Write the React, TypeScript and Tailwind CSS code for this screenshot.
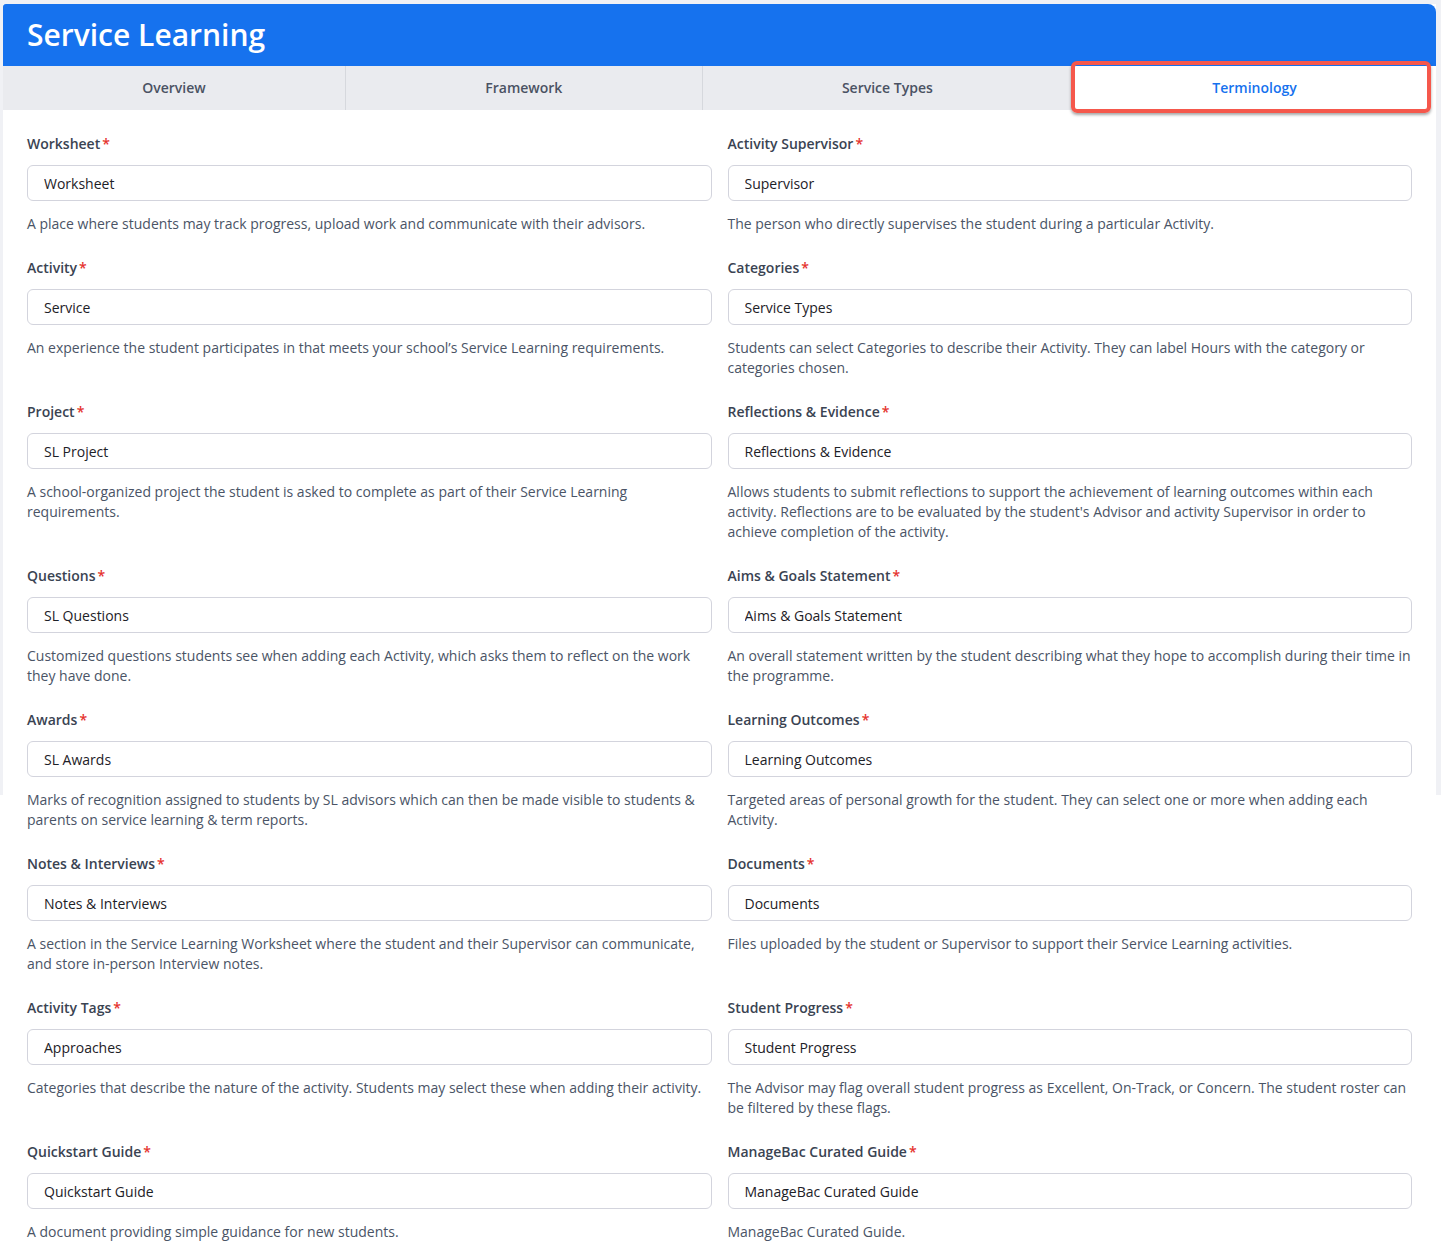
import React from "react";

const TABS = ["Overview", "Framework", "Service Types", "Terminology"];

const TERMS: { label: string; value: string; desc: string }[] = [
  { label: "Worksheet", value: "Worksheet", desc: "A place where students may track progress, upload work and communicate with their advisors." },
  { label: "Activity Supervisor", value: "Supervisor", desc: "The person who directly supervises the student during a particular Activity." },
  { label: "Activity", value: "Service", desc: "An experience the student participates in that meets your school’s Service Learning requirements." },
  { label: "Categories", value: "Service Types", desc: "Students can select Categories to describe their Activity. They can label Hours with the category or categories chosen." },
  { label: "Project", value: "SL Project", desc: "A school-organized project the student is asked to complete as part of their Service Learning requirements." },
  { label: "Reflections & Evidence", value: "Reflections & Evidence", desc: "Allows students to submit reflections to support the achievement of learning outcomes within each activity. Reflections are to be evaluated by the student's Advisor and activity Supervisor in order to achieve completion of the activity." },
  { label: "Questions", value: "SL Questions", desc: "Customized questions students see when adding each Activity, which asks them to reflect on the work they have done." },
  { label: "Aims & Goals Statement", value: "Aims & Goals Statement", desc: "An overall statement written by the student describing what they hope to accomplish during their time in the programme." },
  { label: "Awards", value: "SL Awards", desc: "Marks of recognition assigned to students by SL advisors which can then be made visible to students & parents on service learning & term reports." },
  { label: "Learning Outcomes", value: "Learning Outcomes", desc: "Targeted areas of personal growth for the student. They can select one or more when adding each Activity." },
  { label: "Notes & Interviews", value: "Notes & Interviews", desc: "A section in the Service Learning Worksheet where the student and their Supervisor can communicate, and store in-person Interview notes." },
  { label: "Documents", value: "Documents", desc: "Files uploaded by the student or Supervisor to support their Service Learning activities." },
  { label: "Activity Tags", value: "Approaches", desc: "Categories that describe the nature of the activity. Students may select these when adding their activity." },
  { label: "Student Progress", value: "Student Progress", desc: "The Advisor may flag overall student progress as Excellent, On-Track, or Concern. The student roster can be filtered by these flags." },
  { label: "Quickstart Guide", value: "Quickstart Guide", desc: "A document providing simple guidance for new students." },
  { label: "ManageBac Curated Guide", value: "ManageBac Curated Guide", desc: "ManageBac Curated Guide." },
];

function TermField({ label, value, desc }: { label: string; value: string; desc: string }) {
  return (
    <div className="flex flex-col">
      <label className="text-[14px] leading-5 font-semibold text-[#3a4352]">
        {label}
        <span className="ml-[2px] text-[#e5322d]">*</span>
      </label>
      <input
        defaultValue={value}
        className="mt-[11px] h-9 w-full rounded-[6px] border border-[#d3d4dd] bg-white px-4 text-[14px] text-[#1d2127] outline-none"
      />
      <p className="mt-[13px] text-[14px] leading-5 text-[#4a5466]">{desc}</p>
    </div>
  );
}

export default function App() {
  const active = "Terminology";
  return (
    <div className="min-h-[1256px] bg-[linear-gradient(to_bottom,#f0f1f5_795px,#ffffff_795px)] pl-[3px] pr-[5px] pt-[4px] font-['Open_Sans',sans-serif]">
      <div className="bg-white">
        <div className="flex h-[62px] items-center rounded-tl-[3px] rounded-tr-[8px] bg-[#1672ee] px-6">
          <h1 className="text-[30px] font-semibold leading-none text-white">Service Learning</h1>
        </div>

        <div className="flex h-[44px] bg-[#eaebef]">
          {TABS.map((t, i) => (
            <div
              key={t}
              className={`relative flex flex-auto items-center justify-center pb-[2px] text-[14px] font-semibold ${
                i > 0 ? "border-l border-[#d6d8dd]" : ""
              } ${t === active ? "bg-white text-[#1672ee]" : "text-[#4a5263]"}`}
            >
              {t}
              {t === active && (
                <div className="pointer-events-none absolute -left-[2px] right-[5px] -top-[5px] -bottom-[3px] rounded-[6px] border-4 border-[#f5584c] shadow-[0_2px_3px_rgba(0,0,0,0.35)]" />
              )}
            </div>
          ))}
        </div>

        <div className="grid grid-cols-2 gap-x-4 gap-y-6 px-6 pt-6 pb-10">
          {TERMS.map((t) => (
            <TermField key={t.label} {...t} />
          ))}
        </div>
      </div>
    </div>
  );
}
